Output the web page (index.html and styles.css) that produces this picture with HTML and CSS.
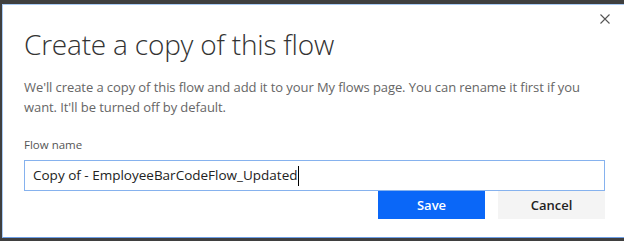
FILE: index.html
```html
<!DOCTYPE html>
<html lang="en">
<head>
  <meta charset="UTF-8" />
  <title>Create a copy of this flow</title>
  <link rel="stylesheet" href="styles.css">
</head>
<body>

  <div class="dialog">
    <button class="close-btn" aria-label="Close">
      <svg width="10" height="10" viewBox="0 0 10 10">
        <path d="M0.5 0.5 L9.5 9.5 M9.5 0.5 L0.5 9.5" stroke="#555" stroke-width="1.1" fill="none" />
      </svg>
    </button>

    <h1 class="title">Create a copy of this flow</h1>
    <p class="desc">We'll create a copy of this flow and add it to your My flows page. You can rename it first if you want. It'll be turned off by default.</p>

    <label class="field-label">Flow name</label>
    <div class="text-field">Copy of - EmployeeBarCodeFlow_Updated<span class="caret"></span></div>

    <div class="actions">
      <button class="btn btn-primary">Save</button>
      <button class="btn btn-default">Cancel</button>
    </div>
  </div>

</body>
</html>
```

FILE: styles.css
```css
html, body {
  height: 100%;
}

body {
  margin: 0;
  box-sizing: border-box;
  padding: 4px 0 3px 2px;
  background: #3f3f3f;
  font-family: "Open Sans", "Noto Sans", Arial, sans-serif;
  overflow: hidden;
}

.dialog {
  position: relative;
  box-sizing: border-box;
  height: 100%;
  background: #fff;
  border-top: 1px solid #a9cbf5;
  border-left: 1px solid #a9cbf5;
  border-bottom: 1px solid #6e9fe6;
  padding: 0 19px 0 21px;
  display: flex;
  flex-direction: column;
}

.close-btn {
  position: absolute;
  top: 9px;
  right: 14px;
  width: 10px;
  height: 10px;
  padding: 0;
  border: none;
  background: none;
  display: flex;
}

.title {
  margin: 21px 0 0;
  font-size: 28px;
  line-height: 36px;
  font-weight: 300;
  color: #333;
  letter-spacing: -0.2px;
}

.desc {
  margin: 15px 0 0;
  font-size: 13px;
  line-height: 20px;
  color: #666;
  letter-spacing: -0.08px;
  max-width: 570px;
}

.field-label {
  margin-top: 20px;
  font-size: 11.5px;
  line-height: 16px;
  color: #555;
}

.text-field {
  margin-top: 7px;
  height: 31px;
  box-sizing: border-box;
  border: 1px solid #86b2ee;
  padding: 0 8px;
  font-size: 13.5px;
  line-height: 29px;
  color: #222;
  display: flex;
  align-items: center;
}

.caret {
  display: inline-block;
  width: 1px;
  height: 20px;
  background: #000;
  margin-left: 1px;
}

.actions {
  display: flex;
  justify-content: flex-end;
  gap: 13px;
}

.btn {
  width: 107px;
  height: 28px;
  border: none;
  padding: 0;
  font-family: inherit;
  font-size: 13px;
  font-weight: 600;
  cursor: pointer;
}

.btn-primary {
  background: #0a67f8;
  color: #fff;
}

.btn-default {
  background: #f4f4f4;
  color: #222;
}
```
